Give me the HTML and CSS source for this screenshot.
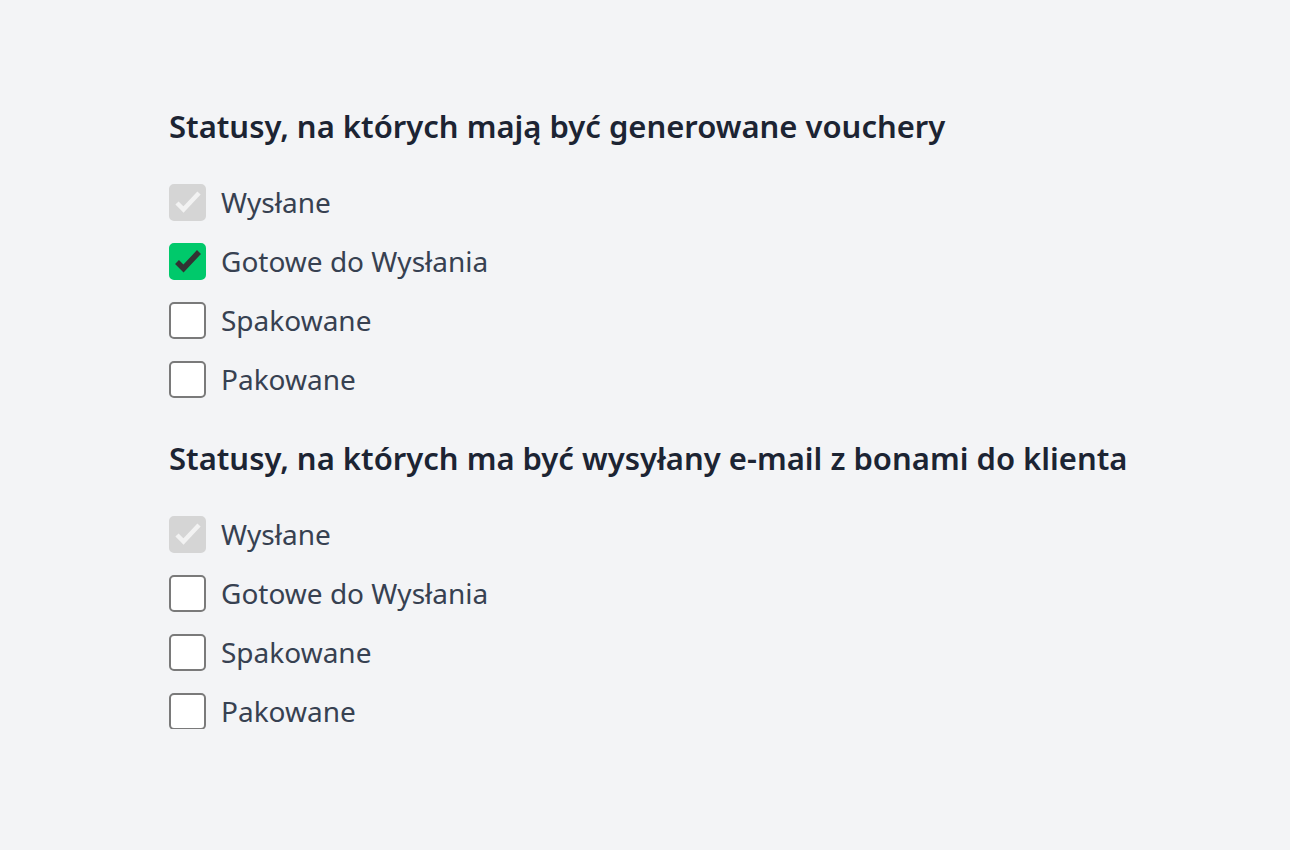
FILE: index.html
```html
<!DOCTYPE html>
<html lang="pl">
<head>
    <meta charset="UTF-8">
    <title>Statusy voucherów</title>
    <link rel="stylesheet" href="styles.css">
</head>
<body>

    <div class="container">

        <!-- Generowanie voucherów -->
        <div class="section">
            <h2>Statusy, na których mają być generowane vouchery</h2>
            <ul class="list">
                <li class="row">
                    <span class="box disabled"><svg viewBox="2 2 33 33"><path d="M8 19 L14.5 25.5 L30 9"/></svg></span>
                    <span class="label">Wysłane</span>
                </li>
                <li class="row">
                    <span class="box checked"><svg viewBox="2 2 33 33"><path d="M8 19 L14.5 25.5 L30 9"/></svg></span>
                    <span class="label">Gotowe do Wysłania</span>
                </li>
                <li class="row">
                    <span class="box"></span>
                    <span class="label">Spakowane</span>
                </li>
                <li class="row">
                    <span class="box"></span>
                    <span class="label">Pakowane</span>
                </li>
            </ul>
        </div>

        <!-- Wysyłka e-maili -->
        <div class="section">
            <h2>Statusy, na których ma być wysyłany e-mail z bonami do klienta</h2>
            <ul class="list">
                <li class="row">
                    <span class="box disabled"><svg viewBox="2 2 33 33"><path d="M8 19 L14.5 25.5 L30 9"/></svg></span>
                    <span class="label">Wysłane</span>
                </li>
                <li class="row">
                    <span class="box"></span>
                    <span class="label">Gotowe do Wysłania</span>
                </li>
                <li class="row">
                    <span class="box"></span>
                    <span class="label">Spakowane</span>
                </li>
                <li class="row">
                    <span class="box"></span>
                    <span class="label">Pakowane</span>
                </li>
            </ul>
        </div>

    </div>

</body>
</html>
```

FILE: styles.css
```css
* {
    margin: 0;
    padding: 0;
    box-sizing: border-box;
}
body {
    background-color: #f3f4f6;
    font-family: "Noto Sans", "Open Sans", sans-serif;
}
.container {
    padding: 106px 0 0 169px;
    display: flex;
    flex-direction: column;
    gap: 41px;
}
h2 {
    font-size: 31px;
    line-height: 40px;
    font-weight: 600;
    color: #1c2433;
    margin-bottom: 38px;
}
.list {
    list-style: none;
    display: flex;
    flex-direction: column;
    gap: 23px;
}
.row {
    display: flex;
    align-items: center;
    gap: 15px;
    height: 36px;
}
.box {
    flex: none;
    width: 37px;
    height: 37px;
    border: 2px solid #7a7a7a;
    border-radius: 5px;
    background: #fff;
}
.box svg {
    display: block;
    width: 33px;
    height: 33px;
    fill: none;
}
.box.checked {
    background: #00c96b;
    border-color: #00c96b;
}
.box.checked svg path {
    stroke: #333;
    stroke-width: 5.5;
}
.box.disabled {
    background: #d5d5d5;
    border-color: #d5d5d5;
}
.box.disabled svg path {
    stroke: #f2f2f2;
    stroke-width: 4.5;
}
.label {
    font-size: 28px;
    color: #374151;
}
```
